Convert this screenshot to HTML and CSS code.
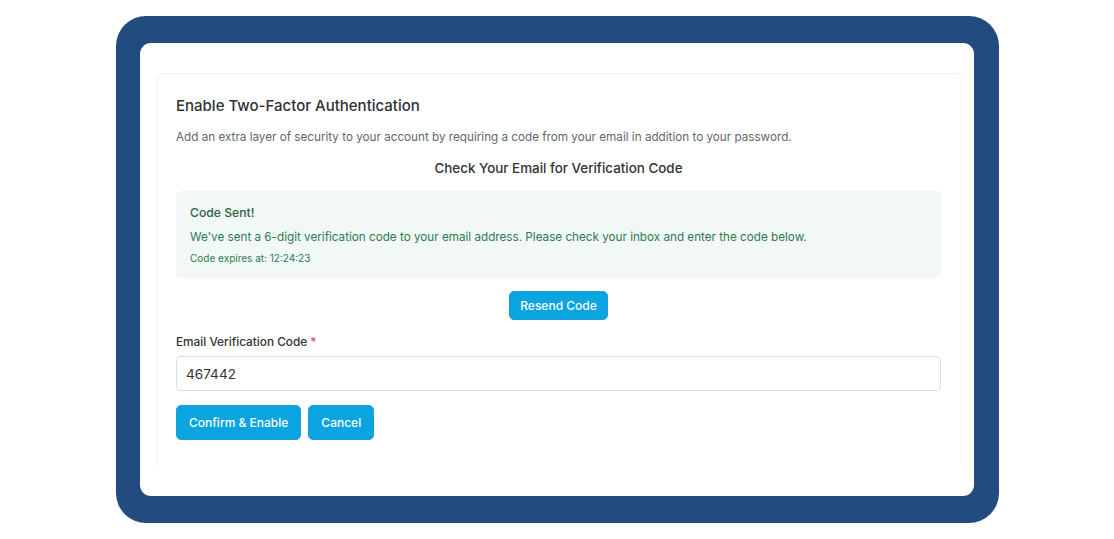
FILE: index.html
```html
<!DOCTYPE html>
<html>
<head>
<meta charset="utf-8">
<link rel="stylesheet" href="styles.css">
</head>
<body>
<div class="stage">
  <div class="frame">
    <div class="screen">
      <div class="viewport">
        <div class="card">
          <h1 class="title">Enable Two-Factor Authentication</h1>
          <p class="desc">Add an extra layer of security to your account by requiring a code from your email in addition to your password.</p>
          <h2 class="subtitle">Check Your Email for Verification Code</h2>
          <div class="alert">
            <div class="alert-title">Code Sent!</div>
            <div class="alert-body">We've sent a 6-digit verification code to your email address. Please check your inbox and enter the code below.</div>
            <div class="alert-small">Code expires at: 12:24:23</div>
          </div>
          <div class="resend-row"><button class="btn btn-sm">Resend Code</button></div>
          <label class="label">Email Verification Code <span class="req">*</span></label>
          <div class="input">467442</div>
          <div class="actions">
            <button class="btn">Confirm &amp; Enable</button>
            <button class="btn">Cancel</button>
          </div>
        </div>
      </div>
    </div>
  </div>
</div>
</body>
</html>
```
FILE: styles.css
```css
* { box-sizing: border-box; }
html, body { margin: 0; padding: 0; background: #fff; }
body { font-family: Inter, "Liberation Sans", sans-serif; width: 1114px; height: 539px; overflow: hidden; }
.stage { padding: 16px 0 0 116px; }
.frame {
  width: 883px; height: 507px;
  background: #224c80;
  border-radius: 30px;
  padding: 27px 25px 27px 24px;
}
.screen {
  width: 834px; height: 453px;
  background: #fff;
  border-radius: 11px;
  padding: 30px 12px 0 17px;
}
.viewport { height: 394px; overflow: hidden; }
.card {
  border: 1px solid #f1f1f3;
  border-radius: 6px;
  padding: 22px 20px 40px 18px;
  height: 420px;
}
.title { margin: 0; font-size: 15px; font-weight: 500; color: #2f3237; line-height: 20px; }
.desc { margin: 12px 0 0; font-size: 11.7px; color: #62666d; line-height: 18px; }
.subtitle { margin: 13px 0 0; text-align: center; font-size: 13.4px; font-weight: 500; color: #2f3237; line-height: 18px; }
.alert {
  margin-top: 14px;
  background: #f1f8f5;
  border-radius: 5px;
  padding: 14px 14px 13px 14px;
  color: #2e7a55;
}
.alert-title { font-size: 12.2px; font-weight: 500; color: #2c6447; line-height: 16px; }
.alert-body { margin-top: 8px; font-size: 11.7px; line-height: 16px; }
.alert-small { margin-top: 6px; font-size: 10px; line-height: 14px; }
.resend-row { display: flex; justify-content: center; margin-top: 13px; }
.btn {
  font-family: Inter, "Liberation Sans", sans-serif;
  background: #0aa4e1;
  color: #fff;
  border: 1px solid #1b9fd6;
  border-radius: 5px;
  font-size: 12px;
  font-weight: 500;
  height: 35px;
  padding: 0 12px;
  cursor: pointer;
}
.btn-sm { height: 29px; padding: 0 10px; }
.label { display: block; margin-top: 14px; font-size: 11.8px; font-weight: 500; color: #2f3237; line-height: 16px; }
.req { color: #e5484d; }
.input {
  margin-top: 6px;
  height: 35px;
  border: 1px solid #dcdde1;
  border-radius: 5px;
  padding: 0 9px;
  display: flex; align-items: center;
  font-size: 13.6px;
  color: #2f3237;
}
.actions { display: flex; gap: 7px; margin-top: 14px; }
```
